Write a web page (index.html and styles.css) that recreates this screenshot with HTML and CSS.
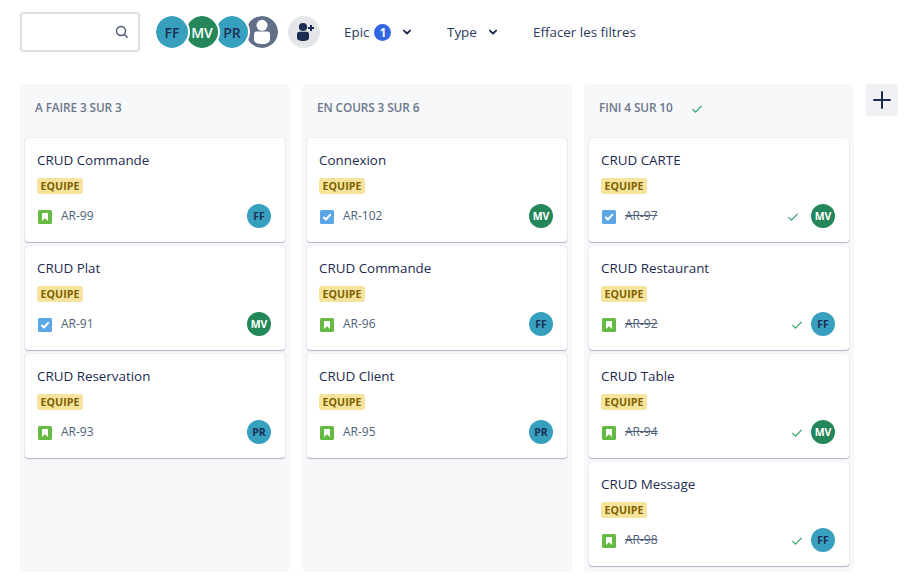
FILE: index.html
```html
<!DOCTYPE html>
<html lang="fr">
<head>
<meta charset="utf-8">
<title>Tableau</title>
<link rel="stylesheet" href="styles.css">
</head>
<body>
<svg class="defs" aria-hidden="true">
  <symbol id="story" viewBox="0 0 14 14"><rect width="14" height="14" rx="1.5" fill="#65ba43"/><path d="M4 3.6a.6.6 0 0 1 .6-.6h4.8a.6.6 0 0 1 .6.6V11L7 8.2 4 11z" fill="#fff"/></symbol>
  <symbol id="task" viewBox="0 0 14 14"><rect width="14" height="14" rx="1.5" fill="#5ba7e5"/><path d="M3.900 7.500l2 2 4.300-4.600" fill="none" stroke="#fff" stroke-width="2" stroke-linecap="round" stroke-linejoin="round"/></symbol>
  <symbol id="done" viewBox="0 0 12 10"><path d="M1.300 5.100l3.200 3L10.600 1.900" fill="none" stroke="#36a56d" stroke-width="1.300"/></symbol>
  <symbol id="chevron" viewBox="0 0 10 8"><path d="M1.900 2.600L5 5.500l3.100-2.900" fill="none" stroke="#1c2b50" stroke-width="1.900" stroke-linecap="round" stroke-linejoin="round"/></symbol>
</svg>
<header class="toolbar">
  <div class="search"><svg width="14" height="14" viewBox="0 0 14 14"><circle cx="6" cy="6" r="4.500"/><path d="M9.300 9.300l2.900 2.900"/></svg></div>
  <div class="people">
    <span class="person blue">FF</span><span class="person green">MV</span><span class="person blue">PR</span><span class="person gray"><svg width="32" height="32" viewBox="0 0 32 32"><circle cx="16" cy="9.300" r="5.500"/><path d="M8 18.200a2.600 2.600 0 0 1 2.600-2.600h10.800a2.600 2.600 0 0 1 2.600 2.600v5.300c0 3-3.400 4.700-8 4.700s-8-1.700-8-4.700z"/></svg></span>
  </div>
  <button class="add-person" aria-label="Ajouter"><svg width="32" height="32" viewBox="0 0 32 32"><circle cx="15" cy="11" r="4.100"/><path d="M9 18a2.200 2.200 0 0 1 2.200-2.200h7.600A2.200 2.200 0 0 1 21 18v4.100c0 2-2.500 3-6 3s-6-1-6-3z"/><path class="plus" d="M23 9v6M20 12h6"/></svg></button>
  <button class="filter epic"><span>Epic</span><span class="count">1</span><svg width="10" height="8"><use href="#chevron"/></svg></button>
  <button class="filter type"><span>Type</span><svg width="10" height="8"><use href="#chevron"/></svg></button>
  <button class="filter clear">Effacer les filtres</button>
</header>
<main class="board">
  <section class="column">
    <h2>A FAIRE 3 SUR 3</h2>
    <article class="card"><h3>CRUD Commande</h3><span class="label">EQUIPE</span><footer><svg class="kind"><use href="#story"/></svg><span class="key">AR-99</span><span class="avatar blue">FF</span></footer></article>
    <article class="card"><h3>CRUD Plat</h3><span class="label">EQUIPE</span><footer><svg class="kind"><use href="#task"/></svg><span class="key">AR-91</span><span class="avatar green">MV</span></footer></article>
    <article class="card"><h3>CRUD Reservation</h3><span class="label">EQUIPE</span><footer><svg class="kind"><use href="#story"/></svg><span class="key">AR-93</span><span class="avatar blue">PR</span></footer></article>
  </section>
  <section class="column">
    <h2>EN COURS 3 SUR 6</h2>
    <article class="card"><h3>Connexion</h3><span class="label">EQUIPE</span><footer><svg class="kind"><use href="#task"/></svg><span class="key">AR-102</span><span class="avatar green">MV</span></footer></article>
    <article class="card"><h3>CRUD Commande</h3><span class="label">EQUIPE</span><footer><svg class="kind"><use href="#story"/></svg><span class="key">AR-96</span><span class="avatar blue">FF</span></footer></article>
    <article class="card"><h3>CRUD Client</h3><span class="label">EQUIPE</span><footer><svg class="kind"><use href="#story"/></svg><span class="key">AR-95</span><span class="avatar blue">PR</span></footer></article>
  </section>
  <section class="column finished">
    <h2><span>FINI 4 SUR 10</span><svg class="check"><use href="#done"/></svg></h2>
    <article class="card is-task"><h3>CRUD CARTE</h3><span class="label">EQUIPE</span><footer><svg class="kind"><use href="#task"/></svg><span class="key">AR-97</span><svg class="check"><use href="#done"/></svg><span class="avatar green">MV</span></footer></article>
    <article class="card"><h3>CRUD Restaurant</h3><span class="label">EQUIPE</span><footer><svg class="kind"><use href="#story"/></svg><span class="key">AR-92</span><svg class="check"><use href="#done"/></svg><span class="avatar blue">FF</span></footer></article>
    <article class="card"><h3>CRUD Table</h3><span class="label">EQUIPE</span><footer><svg class="kind"><use href="#story"/></svg><span class="key">AR-94</span><svg class="check"><use href="#done"/></svg><span class="avatar green">MV</span></footer></article>
    <article class="card"><h3>CRUD Message</h3><span class="label">EQUIPE</span><footer><svg class="kind"><use href="#story"/></svg><span class="key">AR-98</span><svg class="check"><use href="#done"/></svg><span class="avatar blue">FF</span></footer></article>
  </section>
  <button class="add-column" aria-label="Ajouter une colonne"><svg width="18" height="18" viewBox="0 0 18 18"><path d="M9 1v16M1 9h16"/></svg></button>
</main>
</body>
</html>
```
FILE: styles.css
```css
* { box-sizing: border-box; }
body {
  margin: 0;
  padding: 12px 9px 14px 20px;
  height: 586px;
  overflow: hidden;
  background: #fff;
  color: #1c2b50;
  font-family: "Open Sans", "Noto Sans", sans-serif;
}
svg { display: block; flex: none; }
.defs { position: absolute; width: 0; height: 0; }
button { border: 0; padding: 0; margin: 0; background: none; font: inherit; color: inherit; }
h2, h3 { margin: 0; }
.toolbar { display: flex; align-items: center; height: 40px; white-space: nowrap; }
.search {
  display: flex;
  align-items: center;
  justify-content: flex-end;
  width: 120px;
  height: 40px;
  padding-right: 9px;
  border: 2px solid #dfe0e7;
  border-radius: 3px;
}
.search svg { fill: none; stroke: #44546f; stroke-width: 1.3; stroke-linecap: round; }
.people { display: flex; margin-left: 14px; }
.person {
  display: flex;
  align-items: center;
  justify-content: center;
  width: 36px;
  height: 36px;
  margin-right: -6px;
  border: 2px solid #fff;
  border-radius: 50%;
  background-clip: padding-box;
  font-size: 14px;
  font-weight: 600;
}
.person:nth-child(1) { z-index: 4; }
.person:nth-child(2) { z-index: 3; }
.person:nth-child(3) { z-index: 2; }
.blue { background-color: #37a0bf; color: #1b2f57; }
.green { background-color: #23875a; color: #fff; }
.gray { background-color: #626f89; }
.gray svg { fill: #fff; }
.add-person { width: 32px; height: 32px; margin-left: 14px; border-radius: 50%; background: #e4e6ea; }
.add-person svg { fill: #1c2b50; }
.add-person .plus { stroke: #1c2b50; stroke-width: 2; }
.filter { display: flex; align-items: center; height: 32px; font-size: 13.4px; font-weight: 500; color: #2b395b; }
.epic { margin-left: 24px; width: 103px; }
.count {
  width: 17px;
  height: 17px;
  margin: 0 11px 0 5px;
  border-radius: 50%;
  background: #3266e3;
  color: #fff;
  font-size: 11.5px;
  font-weight: 700;
  line-height: 17px;
  text-align: center;
}
.type { width: 86px; }
.type svg { margin-left: 11px; }
.board { display: flex; gap: 12px; margin-top: 32px; height: 488px; }
.column {
  display: flex;
  flex-direction: column;
  gap: 4px;
  width: 270px;
  padding: 0 5px;
  border-radius: 5px;
  background: #f7f8fa;
}
h2 {
  display: flex;
  align-items: center;
  height: 50px;
  padding: 0 10px 4px;
  font-size: 11.8px;
  font-weight: 600;
  letter-spacing: -.1px;
  color: #6b778c;
  white-space: nowrap;
}
.check { width: 12px; height: 10px; }
h2 .check { margin: 3px 0 0 18px; }
.card {
  height: 104px;
  padding: 12px 14px 14px 12px;
  border-radius: 3px;
  background: #fff;
  box-shadow: 0 1px 1px rgba(9, 30, 66, .27), 0 0 1px rgba(9, 30, 66, .3);
}
h3 { height: 20px; font-size: 13.4px; font-weight: 400; line-height: 20px; white-space: nowrap; }
.label {
  display: block;
  width: 46px;
  height: 16px;
  margin-top: 8px;
  border-radius: 3px;
  background: #f6e49e;
  color: #7f5f01;
  font-size: 10.7px;
  font-weight: 700;
  line-height: 16px;
  text-align: center;
}
.card footer { display: flex; align-items: center; height: 24px; margin-top: 10px; }
.kind { width: 14px; height: 14px; margin: 2px 9px 0 1px; }
.key { margin-top: -2px; font-size: 12px; font-weight: 500; color: #505f79; }
.finished .key { text-decoration: line-through; }
.avatar {
  width: 24px;
  height: 24px;
  margin-left: auto;
  border-radius: 50%;
  font-size: 10.5px;
  font-weight: 700;
  line-height: 24px;
  text-align: center;
}
.card .check { margin: 1px 0 0 auto; }
.check + .avatar { margin-left: 8px; }
.is-task .check + .avatar { margin-left: 12px; }
.add-column {
  display: flex;
  align-items: center;
  justify-content: center;
  width: 32px;
  height: 32px;
  border-radius: 3px;
  background: #f0f1f4;
}
.add-column path { stroke: #1c2b50; stroke-width: 2; stroke-linecap: round; }
```
